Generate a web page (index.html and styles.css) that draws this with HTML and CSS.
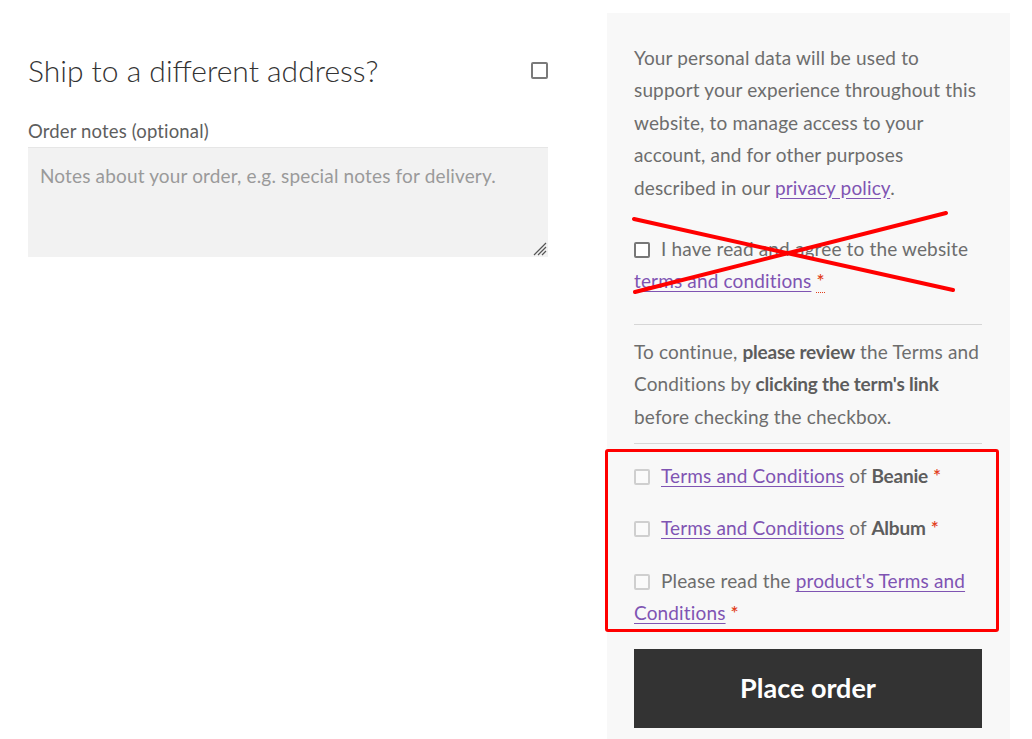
FILE: index.html
```html
<!DOCTYPE html>
<html lang="en">
<head>
<meta charset="utf-8">
<title>Checkout</title>
<link rel="stylesheet" href="styles.css">
</head>
<body>
<div class="page">
  <div class="left">
    <h3 class="ship">
      <span>Ship to a different address?</span>
      <span class="box box-dark"></span>
    </h3>
    <label class="notes-label">Order notes (optional)</label>
    <div class="textarea">
      <span class="placeholder">Notes about your order, e.g. special notes for delivery.</span>
      <svg class="grip" width="16" height="16" viewBox="0 0 16 16"><path d="M15 3L3 15M15 7L7 15M15 11L11 15" stroke="#555" stroke-width="1.2" fill="none"/></svg>
    </div>
  </div>
  <div class="panel">
    <p class="privacy">Your personal data will be used to support your experience throughout this website, to manage access to your account, and for other purposes described in our <a href="#">privacy policy</a>.</p>
    <p class="agree"><span class="box box-dark"></span>I have read and agree to the website <a href="#">terms and conditions</a> <abbr class="req dotted">*</abbr></p>
    <hr class="rule">
    <p class="notice">To continue, <strong>please review</strong> the Terms and Conditions by <strong>clicking the term's link</strong> before checking the checkbox.</p>
    <hr class="rule rule-b">
    <div class="terms">
      <p class="term"><span class="box box-light"></span><a href="#">Terms and Conditions</a> of <strong>Beanie</strong> <span class="req">*</span></p>
      <p class="term"><span class="box box-light"></span><a href="#">Terms and Conditions</a> of <strong>Album</strong> <span class="req">*</span></p>
      <p class="term"><span class="box box-light"></span>Please read the <a href="#">product's Terms and</a> <a href="#">Conditions</a> <span class="req">*</span></p>
    </div>
    <div class="button">Place order</div>
  </div>
  <svg class="cross" width="1032" height="739" viewBox="0 0 1032 739">
    <line x1="634" y1="219" x2="953" y2="290" stroke="#f00" stroke-width="4" stroke-linecap="round"/>
    <line x1="635" y1="292" x2="946" y2="213" stroke="#f00" stroke-width="4" stroke-linecap="round"/>
  </svg>
  <div class="highlight"></div>
</div>
</body>
</html>
```
FILE: styles.css
```css
html, body {
  margin: 0;
  padding: 0;
  background: #ffffff;
}
body {
  font-family: "Lato", "Liberation Sans", sans-serif;
  color: #6d6d6d;
  font-size: 19px;
  letter-spacing: 0.15px;
}
.page {
  position: relative;
  width: 1032px;
  height: 739px;
  overflow: hidden;
  display: flex;
  align-items: flex-start;
  padding: 13px 0 0 28px;
  box-sizing: border-box;
  gap: 59px;
}
.left {
  width: 520px;
  display: flex;
  flex-direction: column;
}
.ship {
  margin: 37px 0 0 0;
  display: flex;
  justify-content: space-between;
  align-items: center;
  font-weight: 300;
  font-size: 30px;
  letter-spacing: 0;
  line-height: 40px;
  color: #333333;
}
.box {
  display: inline-block;
  width: 16px;
  height: 16px;
  box-sizing: border-box;
  border-radius: 2px;
  vertical-align: -2px;
  margin-right: 11px;
}
.ship .box {
  width: 17px;
  height: 17px;
  margin-right: 0;
  border: 2px solid #7a7a7a;
}
.box-dark {
  border: 2px solid #777777;
  background: #fff;
}
.box-light {
  border: 2px solid #cfcfcf;
  background: #fafafa;
}
.notes-label {
  margin-top: 28px;
  line-height: 26px;
  color: #5e5e5e;
  font-size: 18.5px;
}
.textarea {
  position: relative;
  margin-top: 3px;
  height: 110px;
  background: #f2f2f2;
  border-top: 1px solid #e6e6e6;
  box-sizing: border-box;
  padding: 14px 12px;
}
.placeholder {
  color: #9a9a9a;
  line-height: 28px;
}
.grip {
  position: absolute;
  right: 1px;
  bottom: 1px;
}
.panel {
  width: 403px;
  min-height: 730px;
  background: #f8f8f8;
  box-sizing: border-box;
  padding: 29px 28px 0 27px;
  line-height: 32.4px;
}
.panel p {
  margin: 0;
}
.panel a {
  color: #7f54b3;
  text-decoration: underline;
  text-underline-offset: 3px;
}
.agree {
  margin-top: 29px !important;
}
.req {
  color: #e2401c;
  text-decoration: none;
  font-weight: 600;
}
.dotted {
  border-bottom: 1px dotted #e2401c;
}
.rule {
  border: 0;
  border-top: 1px solid #d6d6d6;
  margin: 26px 0 11px 0;
}
.rule-b {
  margin: 10px 0 16px 0;
}
.panel strong {
  font-weight: 700;
  color: #5d5d5d;
  letter-spacing: -0.2px;
}
.terms {
  display: flex;
  flex-direction: column;
  gap: 20px;
}
.button {
  margin-top: 19px;
  height: 79px;
  background: #333333;
  color: #ffffff;
  font-size: 27px;
  font-weight: 700;
  letter-spacing: 0;
  display: flex;
  align-items: center;
  justify-content: center;
}
.cross {
  position: absolute;
  left: 0;
  top: 0;
  pointer-events: none;
}
.highlight {
  position: absolute;
  left: 605px;
  top: 449px;
  width: 394px;
  height: 183px;
  box-sizing: border-box;
  border: 3.5px solid #ff0000;
  border-radius: 3px;
  pointer-events: none;
}
```
